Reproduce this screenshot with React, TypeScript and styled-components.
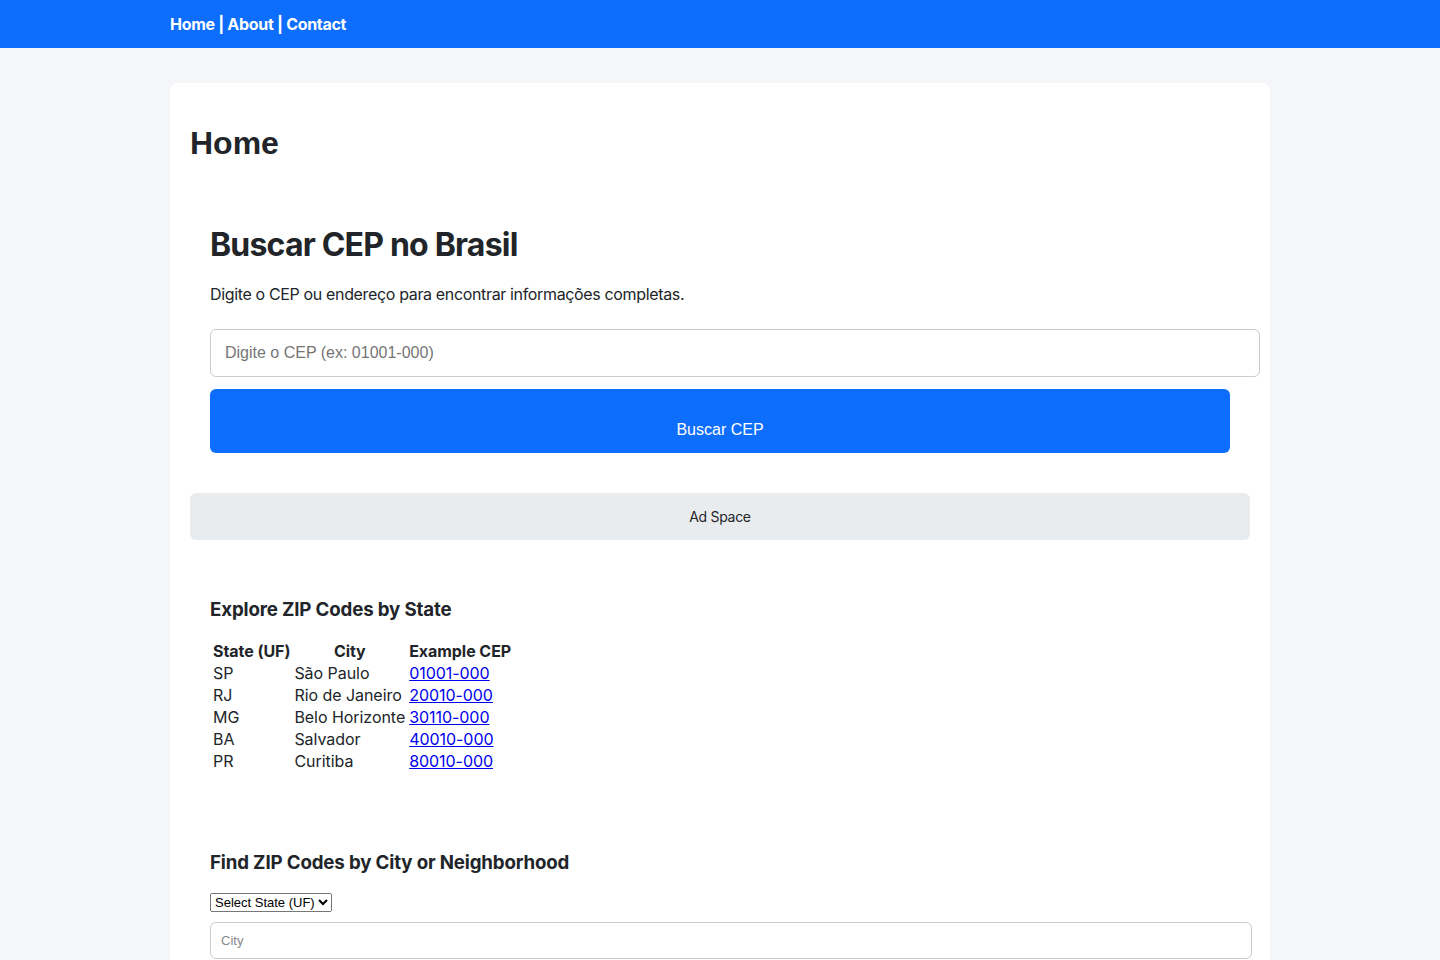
import React from "react";
import styled, { createGlobalStyle } from "styled-components";

const GlobalStyle = createGlobalStyle`
  body {
    margin: 0;
    background: #f4f6f9;
    font-family: Inter, "Noto Sans", sans-serif;
    letter-spacing: -0.3px;
    color: #212529;
  }
`;

const NavBar = styled.nav`
  height: 48px;
  background: #0d6efd;
  padding: 0 170px;
  display: flex;
  align-items: center;
  color: #fff;
  font-weight: 700;
  font-size: 16px;
  white-space: pre;
`;

const NavLink = styled.a`
  color: #fff;
  text-decoration: none;
`;

const Container = styled.main`
  width: 1060px;
  margin: 35px auto 0;
  background: #fff;
  border-radius: 8px;
  padding: 20px;
`;

const PageTitle = styled.h1`
  font-family: "Liberation Sans", Arial, sans-serif;
  letter-spacing: 0;
  font-size: 32px;
  line-height: 38px;
  margin: 21px 0;
`;

const Section = styled.section<{ gap?: number }>`
  padding: 20px;
  margin-top: ${({ gap }) => gap ?? 0}px;
`;

const HeroTitle = styled.h2`
  font-size: 32px;
  line-height: 38px;
  font-weight: 700;
  letter-spacing: -0.8px;
  margin: 23px 0 0;
`;

const Lead = styled.p`
  font-size: 16px;
  line-height: 24px;
  letter-spacing: -0.35px;
  margin: 18px 0 23px;
`;

const CepInput = styled.input`
  display: block;
  width: 100%;
  padding: 14px 14px;
  font-size: 16px;
  font-family: "Liberation Sans", Arial, sans-serif;
  border: 1px solid #ccc;
  border-radius: 6px;
  outline: none;
  &::placeholder {
    color: #757575;
  }
`;

const SearchButton = styled.button`
  display: block;
  width: 100%;
  height: 64px;
  margin-top: 12px;
  padding: 18px 0 0;
  background: #0d6efd;
  color: #fff;
  border: none;
  border-radius: 6px;
  font-family: "Liberation Sans", Arial, sans-serif;
  font-size: 16px;
  cursor: pointer;
`;

const AdSpace = styled.div`
  margin-top: 20px;
  height: 47px;
  background: #e9ecef;
  border-radius: 6px;
  display: flex;
  align-items: center;
  justify-content: center;
  font-size: 14px;
`;

const SectionTitle = styled.h3`
  font-size: 18.7px;
  line-height: 22px;
  font-weight: 700;
  letter-spacing: -0.15px;
  margin: 18.7px 0;
`;

const StateTable = styled.table`
  border-spacing: 2px;
  font-size: 16px;
  line-height: 18px;
  letter-spacing: -0.05px;
  th {
    font-weight: 700;
    padding: 1px;
  }
  td {
    padding: 1px;
  }
  a {
    color: #0000ee;
  }
`;

const StateSelect = styled.select`
  display: block;
  font-family: "Liberation Sans", Arial, sans-serif;
  letter-spacing: 0;
  font-size: 13px;
  color: #000;
`;

const CityInput = styled.input`
  display: block;
  width: 100%;
  margin-top: 10px;
  padding: 10px;
  font-size: 13px;
  font-family: "Liberation Sans", Arial, sans-serif;
  border: 1px solid #ccc;
  border-radius: 6px;
  outline: none;
  &::placeholder {
    color: #888;
  }
`;

const states = [
  { uf: "SP", city: "São Paulo", cep: "01001-000" },
  { uf: "RJ", city: "Rio de Janeiro", cep: "20010-000" },
  { uf: "MG", city: "Belo Horizonte", cep: "30110-000" },
  { uf: "BA", city: "Salvador", cep: "40010-000" },
  { uf: "PR", city: "Curitiba", cep: "80010-000" },
];

const App = () => {
  return (
    <>
      <GlobalStyle />
      <NavBar>
        <NavLink href="#">Home</NavLink>
        {" | "}
        <NavLink href="#">About</NavLink>
        {" | "}
        <NavLink href="#">Contact</NavLink>
      </NavBar>
      <Container>
        <PageTitle>Home</PageTitle>
        <Section>
          <HeroTitle>Buscar CEP no Brasil</HeroTitle>
          <Lead>Digite o CEP ou endereço para encontrar informações completas.</Lead>
          <CepInput placeholder="Digite o CEP (ex: 01001-000)" />
          <SearchButton>Buscar CEP</SearchButton>
        </Section>
        <AdSpace>Ad Space</AdSpace>
        <Section gap={20}>
          <SectionTitle>Explore ZIP Codes by State</SectionTitle>
          <StateTable>
            <thead>
              <tr>
                <th>State (UF)</th>
                <th>City</th>
                <th>Example CEP</th>
              </tr>
            </thead>
            <tbody>
              {states.map((s) => (
                <tr key={s.uf}>
                  <td>{s.uf}</td>
                  <td>{s.city}</td>
                  <td>
                    <a href="#">{s.cep}</a>
                  </td>
                </tr>
              ))}
            </tbody>
          </StateTable>
        </Section>
        <Section gap={20}>
          <SectionTitle>Find ZIP Codes by City or Neighborhood</SectionTitle>
          <StateSelect defaultValue="">
            <option value="">Select State (UF)</option>
            {states.map((s) => (
              <option key={s.uf} value={s.uf}>
                {s.uf}
              </option>
            ))}
          </StateSelect>
          <CityInput placeholder="City" />
        </Section>
      </Container>
    </>
  );
};

export default App;
